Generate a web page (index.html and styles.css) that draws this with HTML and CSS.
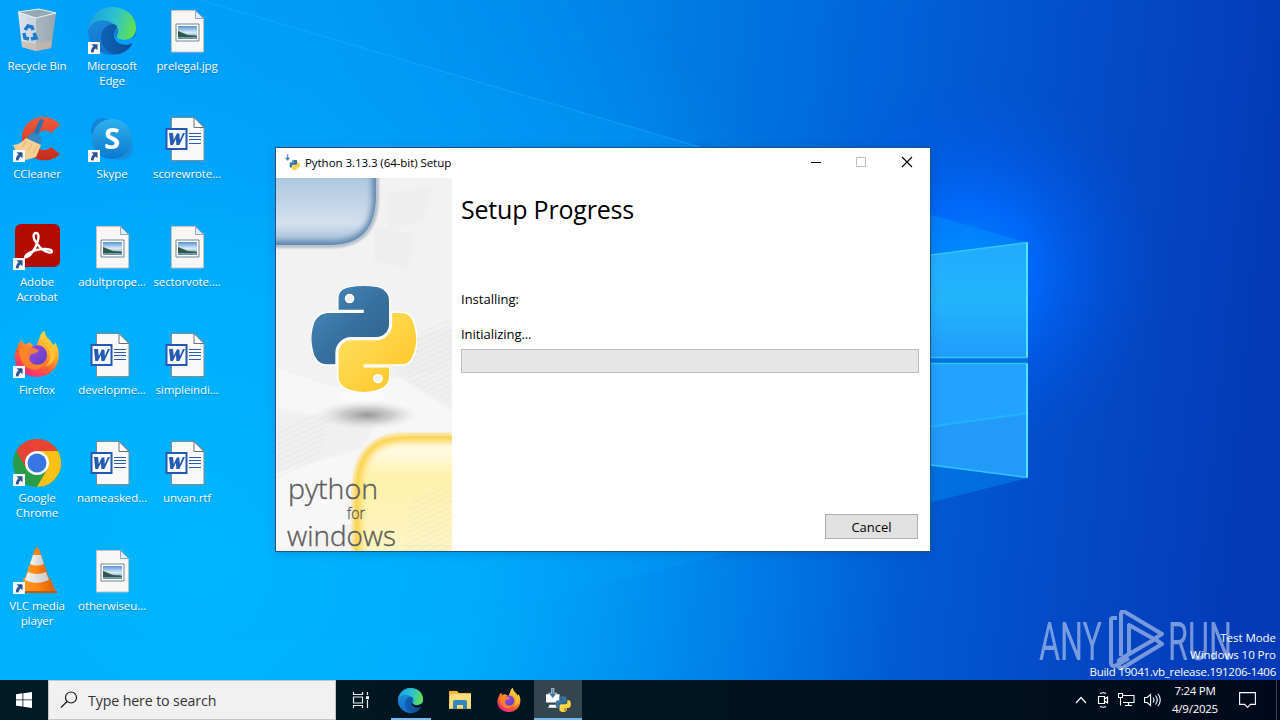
FILE: index.html
```html
<!DOCTYPE html>
<html lang="en">
<head>
<meta charset="utf-8">
<title>Desktop</title>
<link rel="stylesheet" href="styles.css">
</head>
<body>
<svg class="defs" width="0" height="0" aria-hidden="true">
  <defs>
    <linearGradient id="pyBlue" x1="0" y1="0" x2="1" y2="1"><stop offset="0" stop-color="#4a8cc2"/><stop offset=".5" stop-color="#37719f"/><stop offset="1" stop-color="#2f5f8b"/></linearGradient>
    <linearGradient id="pyYellow" x1="0" y1="0" x2="1" y2="1"><stop offset="0" stop-color="#ffe46a"/><stop offset="1" stop-color="#fdc21f"/></linearGradient>
    <linearGradient id="edgeTop" x1="0" y1=".3" x2="1" y2=".5"><stop offset="0" stop-color="#1a9fe0"/><stop offset=".55" stop-color="#2cc3cf"/><stop offset="1" stop-color="#63e04f"/></linearGradient>
    <linearGradient id="edgeMid" x1="0" y1="0" x2=".4" y2="1"><stop offset="0" stop-color="#1b93e2"/><stop offset="1" stop-color="#126fc8"/></linearGradient>
    <linearGradient id="edgeLow" x1="0" y1="0" x2="1" y2="0"><stop offset="0" stop-color="#0f62b5"/><stop offset="1" stop-color="#0b4d98"/></linearGradient>
    <linearGradient id="foxBody" x1=".9" y1="0" x2=".3" y2="1"><stop offset="0" stop-color="#fff04a"/><stop offset=".4" stop-color="#ffa92c"/><stop offset=".7" stop-color="#ff5a38"/><stop offset="1" stop-color="#f0288a"/></linearGradient>
    <linearGradient id="foxGlobe" x1="0" y1="0" x2="1" y2="1"><stop offset="0" stop-color="#a54ae0"/><stop offset="1" stop-color="#5b3fc4"/></linearGradient>
    <linearGradient id="photo" x1="0" y1="0" x2="0" y2="1"><stop offset="0" stop-color="#5b92dc"/><stop offset=".5" stop-color="#d6e9f5"/><stop offset="1" stop-color="#5b8aa0"/></linearGradient>
    <linearGradient id="binBody" x1="0" y1="0" x2="1" y2="0"><stop offset="0" stop-color="#dde6ec"/><stop offset=".6" stop-color="#c3ccd2"/><stop offset="1" stop-color="#8e9ca6"/></linearGradient>
    <linearGradient id="skypeBall" x1="0" y1="0" x2="0" y2="1"><stop offset="0" stop-color="#2db2ee"/><stop offset="1" stop-color="#0b78cf"/></linearGradient>
    <linearGradient id="ccRed" x1="0" y1="0" x2="0" y2="1"><stop offset="0" stop-color="#f15b3b"/><stop offset="1" stop-color="#c52a1c"/></linearGradient>
    <linearGradient id="cone" x1="0" y1="0" x2="1" y2="0"><stop offset="0" stop-color="#ffa126"/><stop offset=".5" stop-color="#ff8412"/><stop offset="1" stop-color="#d95f04"/></linearGradient>
    <linearGradient id="coneWhite" x1="0" y1="0" x2="1" y2="0"><stop offset="0" stop-color="#f6f6f6"/><stop offset="1" stop-color="#c7c9cb"/></linearGradient>
    <mask id="edgeCut"><path d="M0 0h48v48H0z" fill="#fff"/><path d="M29 21c-3 5-3 8 1 10.500 5 2.500 12 2 18-3.500v20h-8l4.500-12c-10 5-20-1-18-10z" fill="#000"/></mask>

    <symbol id="arrow" viewBox="0 0 12 12">
      <path d="M0 0h12v12H0z" fill="#f7f9fb"/>
      <path d="M3.500 2.200h6v6L7.700 6.500C6.200 7.600 5.600 8.600 5.600 10.500L3 10.300C2.800 7.800 3.700 5.900 5.500 4.300z" fill="#2b5590"/>
    </symbol>
    <symbol id="imageFile" viewBox="0 0 48 48">
      <path d="M8.500 3.500h24l8 8v33.500h-32z" fill="#f8f7f7" stroke="#c3c2c4"/>
      <path d="M32.500 3.500v8h8z" fill="#dceefa" stroke="#9aa6b2"/>
      <path d="M13 17h23v17H13z" fill="#fff" stroke="#6f8797"/>
      <path d="M15 19h19v13H15z" fill="url(#photo)"/>
      <path d="M15 24c4 1 6 3 10 4 4 .5 7 0 9 1v1H15z" fill="#2f5948"/>
    </symbol>
    <symbol id="wordFile" viewBox="0 0 48 48">
      <path d="M8.500 2.500h22.500l10 10v33H8.500z" fill="#f9f9f9" stroke="#828b93"/>
      <path d="M31 2.500v10h10z" fill="#fff" stroke="#65717b"/>
      <path d="M26 18.500h12M26 21.500h12M26 24.500h12M26 28.500h12" stroke="#2b5eaf"/>
      <path d="M3.500 14h20v20H3.500z" fill="#fafcff" stroke="#2459b3" stroke-width="2"/>
      <path d="M6 18h4l.8 7 3-6.500h2.500l.6 6.500 3-7H22l-5.600 12h-3l-.5-6-3 6H7.300z" fill="#245ab4"/>
    </symbol>
    <symbol id="edge" viewBox="0 0 48 48">
      <g mask="url(#edgeCut)">
        <circle cx="24" cy="24" r="24" fill="url(#edgeMid)"/>
        <path d="M0 23C1 10 11 0 24 0c15 0 24 10 24 21 0 8-6 12-12 12-5 0-8-2-7-5 3-4 1-9-5-12C15 11 4 13 0 23z" fill="url(#edgeTop)"/>
        <path d="M29 19c-4-4-13-1-15.500 8C11 37 19 48 30 47c7-1 12-6 15-11-9 4-20-1-19-10 .5-3 2-4 3-7z" fill="url(#edgeLow)"/>
      </g>
    </symbol>
    <symbol id="firefox" viewBox="0 0 48 48">
      <path d="M8 10l3 4 6-2c1 2 3 3 6 4l3-7c1-5 3-8 6-9 0 7 7 9 9 15 2-2 2-3 2-3 10 17-1 36-19 36C6 48-5 32 4 16c1-3 2-5 4-6z" fill="url(#foxBody)"/>
      <circle cx="24" cy="25" r="10.500" fill="url(#foxGlobe)"/>
      <path d="M5 19c5-3 9-3 14-2l7 3c-2 4-7 3-9 5-4 9 8 14 16 7-3 9-16 11-22 4-4-4-5-11-6-17z" fill="#ff8a25" opacity=".85"/>
      <path d="M30 14c11 2 10 18 2 23 12-2 15-17 5-24 4 6 0 3-7 1z" fill="#ffc832" opacity=".8"/>
    </symbol>
    <symbol id="python" viewBox="0 0 111.500 112.500">
      <path fill="url(#pyBlue)" fill-rule="evenodd" d="M54.900 0C50.300 0 46 .4 42.100 1.100 30.800 3.100 28.700 7.300 28.700 15v10.250h26.800v3.400H18.600C10.800 28.650 4 33.300 1.900 42.250-.6 52.500-.7 58.800 1.900 69.500c1.900 7.900 6.400 13.600 14.200 13.600h9.250V70.850c0-8.850 7.650-16.650 16.750-16.650h26.800c7.450 0 13.400-6.150 13.400-13.650V15c0-7.250-6.150-12.700-13.400-13.900C64.300.3 59.500 0 54.900 0zM40.400 8.200a5.100 5.100 0 0 1 0 10.200 5.100 5.100 0 0 1 0-10.200z"/>
      <path fill="url(#pyYellow)" fill-rule="evenodd" d="M85.640 28.650v11.900c0 9.250-7.840 17-16.750 17H42.100c-7.330 0-13.400 6.300-13.400 13.640v25.530c0 7.260 6.320 11.540 13.400 13.620 8.500 2.500 16.630 2.950 26.790 0 6.750-1.950 13.400-5.880 13.400-13.620V86.500H55.500v-3.400h40.200c7.800 0 10.700-5.440 13.400-13.600 2.800-8.400 2.690-16.470 0-27.250-1.920-7.750-5.600-13.600-13.400-13.600zM70.570 93.300a5.100 5.100 0 0 1 0 10.200 5.100 5.100 0 0 1 0-10.200z"/>
    </symbol>
    <symbol id="setup" viewBox="0 0 24 24">
      <path class="setup-box" d="M0 6h13v8H0zM3 16h8v3H2v-1h1z"/>
      <path d="M7.500 0v5h3L6.500 10 2.500 5h3V0z" class="setup-arrow"/>
      <use href="#python" x="9" y="8" width="15" height="15"/>
    </symbol>
  </defs>
</svg>

<div class="screen">
  <main class="desktop">
    <svg class="wallpaper" viewBox="0 0 1280 680" preserveAspectRatio="none">
      <defs>
        <linearGradient id="wbase" x1="0" y1="0" x2="1280" y2="130" gradientUnits="userSpaceOnUse">
          <stop offset="0" stop-color="#00a3fa"/><stop offset=".25" stop-color="#0098f4"/><stop offset=".5" stop-color="#0080e6"/><stop offset=".68" stop-color="#0064da"/><stop offset=".85" stop-color="#044cc9"/><stop offset="1" stop-color="#033bb8"/>
        </linearGradient>
        <radialGradient id="wleft" cx="200" cy="560" r="700" gradientUnits="userSpaceOnUse"><stop offset="0" stop-color="#00b8ff"/><stop offset=".4" stop-color="#00b2ff" stop-opacity=".85"/><stop offset=".7" stop-color="#00a6ff" stop-opacity=".4"/><stop offset="1" stop-color="#00a0ff" stop-opacity="0"/></radialGradient>
        <radialGradient id="wglow" cx="970" cy="270" r="190" gradientUnits="userSpaceOnUse"><stop offset="0" stop-color="#0088ff"/><stop offset=".35" stop-color="#006aff" stop-opacity=".85"/><stop offset=".7" stop-color="#005cec" stop-opacity=".35"/><stop offset="1" stop-color="#0054dc" stop-opacity="0"/></radialGradient>
        <linearGradient id="pane" x1="0" y1="0" x2="0" y2="1"><stop offset="0" stop-color="#22aaff"/><stop offset=".5" stop-color="#22b4fb"/><stop offset="1" stop-color="#219cfb"/></linearGradient>
        <linearGradient id="beam" x1="200" y1="0" x2="1028" y2="0" gradientUnits="userSpaceOnUse"><stop offset="0" stop-color="#00a5ff" stop-opacity=".1"/><stop offset=".8" stop-color="#00a5ff" stop-opacity=".3"/><stop offset="1" stop-color="#009dff" stop-opacity=".35"/></linearGradient>
      </defs>
      <path d="M0 0h1280v680H0z" fill="url(#wbase)"/>
      <path d="M0 0h1280v680H0z" fill="url(#wleft)"/>
      <path d="M0 0h1280v680H0z" fill="url(#wglow)"/>
      <path d="M200 0L1028 243V478L380 640H0V0z" fill="url(#beam)"/>
      <path d="M200 0L720 153" stroke="#27b2ff" opacity=".45"/>
      <path d="M900 259l128-17v116H900z" fill="url(#pane)"/>
      <path d="M900 363h128v115L900 461z" fill="#229bf8"/>
      <path d="M900 363h128v50L900 431z" fill="#22a3ff"/>
      <path d="M900 358h128v5H900z" fill="#0074e4"/>
      <path d="M900 431l128-18" stroke="#23bbff" stroke-width="2" opacity=".7"/>
      <path d="M900 259l127-16.500v115H900M900 363.500h127v114L900 461" fill="none" stroke="#31c4ff" stroke-width="1.500"/>
      <path d="M1027 243v114M1027 364v113" stroke="#4ce5ff" stroke-width="2"/>
    </svg>

    <div class="icons">
      <div class="icon">
        <svg class="pic" viewBox="0 0 48 48">
          <path d="M5 5l21-3 17 4-5 35-15 3-14-4z" fill="url(#binBody)"/>
          <path d="M23 10l20-4-5 35-15 3z" fill="#9aa9b4" opacity=".7"/>
          <path d="M5 5l21-3 17 4-20 5z" fill="#94a8b5" stroke="#e8f1f6"/>
          <path d="M9 34l14 3v7L9 40zM23 37l16-4-1 8-15 3z" fill="#cbb5a6" opacity=".7"/>
          <g fill="none" stroke="#1c7bd1" stroke-width="3.500"><path d="M12 23l3-4 4 1 1 3"/><path d="M11 26l1 5 4 1"/><path d="M18 32l5-1-2-5"/></g>
        </svg>
        <span class="label">Recycle Bin</span>
      </div>
      <div class="icon"><svg class="pic" viewBox="0 0 48 48"><use href="#edge" width="48" height="48"/><use href="#arrow" y="35" width="12" height="12"/></svg><span class="label">Microsoft<br>Edge</span></div>
      <div class="icon"><svg class="pic" viewBox="0 0 48 48"><use href="#imageFile" width="48" height="48"/></svg><span class="label">prelegal.jpg</span></div>

      <div class="icon">
        <svg class="pic" viewBox="0 0 48 48">
          <path d="M47 10l-9 8c-7-6-15 0-15 8 0 9 9 12 15 6l9 7C34 52 9 44 9 23 9 2 35-5 47 10z" fill="url(#ccRed)"/>
          <path d="M27 4l4 1-7 18-5-2z" fill="#2674b3"/>
          <path d="M19 17l10 5-2 9-14-7z" fill="#3487c1"/>
          <path d="M13 23l15 7-5 12-10 3C7 42 3 37 0 30c5 0 9-3 13-7z" fill="#f5d094"/>
          <path d="M14 26l-5 6M19 29l-4 7M24 31l-4 7" stroke="#e3b070"/>
          <use href="#arrow" y="35" width="12" height="12"/>
        </svg><span class="label">CCleaner</span>
      </div>
      <div class="icon">
        <svg class="pic" viewBox="0 0 48 48">
          <circle cx="15" cy="15" r="12" fill="#1384da"/><circle cx="33" cy="33" r="12" fill="#188ee3"/><circle cx="24" cy="24" r="20" fill="url(#skypeBall)"/>
          <text x="24" y="34" text-anchor="middle" class="skype-s">S</text>
          <use href="#arrow" y="35" width="12" height="12"/>
        </svg><span class="label">Skype</span>
      </div>
      <div class="icon"><svg class="pic" viewBox="0 0 48 48"><use href="#wordFile" width="48" height="48"/></svg><span class="label">scorewrote...</span></div>

      <div class="icon">
        <svg class="pic" viewBox="0 0 48 48">
          <rect x="2" y="1" width="45" height="43" rx="6" fill="#b30b00"/>
          <path d="M23 10c5 0 2 13-6 22-6 5-7 1 1-3 6-3 15-4 20-2 4 4-6 4-13-5-6-7-5-12-2-12z" fill="none" stroke="#fff" stroke-width="2.400"/>
          <use href="#arrow" y="35" width="12" height="12"/>
        </svg><span class="label">Adobe<br>Acrobat</span>
      </div>
      <div class="icon"><svg class="pic" viewBox="0 0 48 48"><use href="#imageFile" width="48" height="48"/></svg><span class="label">adultprope...</span></div>
      <div class="icon"><svg class="pic" viewBox="0 0 48 48"><use href="#imageFile" width="48" height="48"/></svg><span class="label">sectorvote....</span></div>

      <div class="icon"><svg class="pic" viewBox="0 0 48 48"><use href="#firefox" x="1" width="46" height="46"/><use href="#arrow" y="35" width="12" height="12"/></svg><span class="label">Firefox</span></div>
      <div class="icon"><svg class="pic" viewBox="0 0 48 48"><use href="#wordFile" width="48" height="48"/></svg><span class="label">developme...</span></div>
      <div class="icon"><svg class="pic" viewBox="0 0 48 48"><use href="#wordFile" width="48" height="48"/></svg><span class="label">simpleindi...</span></div>

      <div class="icon">
        <svg class="pic" viewBox="0 0 48 48">
          <circle cx="24" cy="24" r="24" fill="#2a9c47"/>
          <path d="M24 24l-20.800-12A24 24 0 0 1 44.800 12z" fill="#ea4335"/>
          <path d="M24 12h20.800A24 24 0 0 1 24 48l10.400-18z" fill="#fbc116"/>
          <path d="M3.200 12L13.600 30 24 24z" fill="#ea4335"/>
          <circle cx="24" cy="24" r="12" fill="#fff"/><circle cx="24" cy="24" r="9.500" fill="#3876e4"/>
          <use href="#arrow" y="35" width="12" height="12"/>
        </svg><span class="label">Google<br>Chrome</span>
      </div>
      <div class="icon"><svg class="pic" viewBox="0 0 48 48"><use href="#wordFile" width="48" height="48"/></svg><span class="label">nameasked...</span></div>
      <div class="icon"><svg class="pic" viewBox="0 0 48 48"><use href="#wordFile" width="48" height="48"/></svg><span class="label">unvan.rtf</span></div>

      <div class="icon">
        <svg class="pic" viewBox="0 0 48 48">
          <path d="M11 31h26l6 14H7z" fill="url(#cone)"/><path d="M5 44h39v2H5z" fill="#c95b07"/>
          <path d="M22 2q2-3 4 0l11 32q-13 8-26 0z" fill="url(#cone)"/>
          <path d="M20 8h8l3 9q-7 3-14 0z" fill="url(#coneWhite)"/>
          <path d="M15 25q9 4 18 0l3 8q-12 6-24 0z" fill="url(#coneWhite)"/>
          <use href="#arrow" y="35" width="12" height="12"/>
        </svg><span class="label">VLC media<br>player</span>
      </div>
      <div class="icon"><svg class="pic" viewBox="0 0 48 48"><use href="#imageFile" width="48" height="48"/></svg><span class="label">otherwiseu...</span></div>
    </div>

    <svg class="brand" viewBox="0 0 194 62">
      <g fill="#fff">
        <text x="0" y="50" textLength="63" lengthAdjust="spacingAndGlyphs">ANY</text>
        <text x="129" y="50" textLength="64" lengthAdjust="spacingAndGlyphs">RUN</text>
      </g>
      <g fill="none" stroke="#fff" stroke-width="4" stroke-linejoin="round">
        <path d="M78 8h-4q-2 0-2 2v42q0 6 6 3l12-7"/>
        <path d="M82 46V4q0-4 4-2l37 22-8 5-25-14v30"/>
        <path d="M80 49v7q0 4 5 1l38-23-7-5-36 21"/>
      </g>
    </svg>
    <div class="build">
      <p class="mode">Test Mode</p>
      <p class="edition">Windows 10 Pro</p>
      <p class="number">Build 19041.vb_release.191206-1406</p>
    </div>

    <section class="window">
      <header class="titlebar">
        <svg class="app light" viewBox="0 0 24 24"><use href="#setup" width="24" height="24"/></svg>
        <h1 class="title">Python 3.13.3 (64-bit) Setup</h1>
        <svg class="control" viewBox="0 0 46 30"><path d="M19 14.500h10" stroke="#000"/></svg>
        <svg class="control" viewBox="0 0 46 30"><path d="M18.500 9.500h9v9h-9z" fill="none" stroke="#bdbdbd"/></svg>
        <svg class="control" viewBox="0 0 46 30"><path d="M18 9l10 10M28 9L18 19" stroke="#000" stroke-width="1.100"/></svg>
      </header>
      <div class="body">
        <svg class="banner" viewBox="0 0 176 373">
          <defs>
            <linearGradient id="bblue" x1="0" y1="0" x2="0" y2="1"><stop offset="0" stop-color="#abc5dd"/><stop offset=".7" stop-color="#d3e0ee"/><stop offset="1" stop-color="#9dbad5"/></linearGradient>
            <linearGradient id="byellow" x1="0" y1="0" x2="0" y2="1"><stop offset="0" stop-color="#fffbe8"/><stop offset=".15" stop-color="#fffadf"/><stop offset=".35" stop-color="#fff1ab"/><stop offset="1" stop-color="#fff5c4"/></linearGradient>
            <radialGradient id="bshadow"><stop offset="0" stop-color="#777" stop-opacity=".75"/><stop offset=".5" stop-color="#999" stop-opacity=".45"/><stop offset="1" stop-color="#ccc" stop-opacity="0"/></radialGradient>
            <pattern id="hatch" width="7" height="5" patternUnits="userSpaceOnUse" patternTransform="rotate(-25)"><path d="M0 2h7" stroke="#cfcfcf" stroke-width="1"/></pattern>
            <filter id="soft" x="-20%" y="-20%" width="140%" height="140%"><feGaussianBlur stdDeviation="3"/></filter>
            <filter id="softer"><feGaussianBlur stdDeviation="1.200"/></filter>
            <clipPath id="cblue"><path d="M0 0h100v18Q100 67 54 67H0z"/></clipPath>
            <clipPath id="cyellow"><path d="M176 258h-46q-51 0-51 57v58h97z"/></clipPath>
          </defs>
          <path d="M0 0h176v373H0z" fill="#f2f2f2"/>
          <path d="M0 190l60 20 116-20v120L0 373z" fill="#f7f7f7"/>
          <path d="M112 15l43-6-8 34-34 8zM98 48l40 8-5 35-35-8zM0 230l100 18-12 22-88 25zM110 170l66-22v85l-55-35z" fill="#ebebeb" opacity=".5" filter="url(#softer)"/>
          <path d="M0 250l54-18-10 48-44 22zM125 155l51-14v85l-44-21z" fill="url(#hatch)" opacity=".3"/>
          <path d="M101-9v27Q101 68 54 68H-9" fill="none" stroke="#b3bfca" stroke-width="4" filter="url(#softer)"/>
          <g clip-path="url(#cblue)"><path d="M-5-5h105v23Q100 67 54 67H-5z" fill="url(#bblue)"/><path d="M101-20v38Q101 68 54 68H-20" fill="none" stroke="#5580a9" stroke-width="9" filter="url(#soft)"/></g>
          <path d="M176 257h-46q-52 0-52 58v58" fill="none" stroke="#fbe08a" stroke-width="4" filter="url(#softer)"/>
          <g clip-path="url(#cyellow)"><path d="M176 258h-46q-51 0-51 57v58h97z" fill="url(#byellow)"/><path d="M190 258h-60q-51 0-51 57v80" fill="none" stroke="#fbd34f" stroke-width="12" filter="url(#soft)"/><path d="M135 320l41-15v68h-48z" fill="url(#hatch)" opacity=".3"/></g>
          <ellipse cx="91" cy="237" rx="51" ry="14" fill="url(#bshadow)"/>
          <path d="M63 215h45v7H63z" fill="#fff" opacity=".4"/>
          <g stroke="#fff" stroke-width="3" paint-order="stroke"><use href="#python" x="35" y="108" width="106" height="106"/></g>
          <g class="slogan">
            <text x="12" y="320.500" font-size="28" textLength="90" lengthAdjust="spacingAndGlyphs">python</text>
            <text x="71" y="341" font-size="17" textLength="18" lengthAdjust="spacingAndGlyphs">for</text>
            <text x="11" y="368" font-size="28" textLength="109" lengthAdjust="spacingAndGlyphs">windows</text>
          </g>
        </svg>
        <div class="content">
          <h2 class="heading">Setup Progress</h2>
          <p class="status">Installing:</p>
          <p class="step">Initializing...</p>
          <div class="progress"></div>
          <button class="cancel" type="button">Cancel</button>
        </div>
      </div>
    </section>
  </main>

  <footer class="taskbar">
    <div class="start"><svg width="16" height="16" viewBox="0 0 16 16"><path d="M0 2.200l6.500-.9v6.200H0zM7.300 1.200L16 0v7.500H7.300zM0 8.300h6.500v6.200L0 13.700zM7.300 8.300H16V16l-8.700-1.200z" fill="#fff"/></svg></div>
    <div class="search">
      <svg width="18" height="18" viewBox="0 0 18 18"><circle cx="11" cy="6.500" r="5.500" fill="none" stroke="#1c1c1c" stroke-width="1.200"/><path d="M7 10.500L1 16.500" stroke="#1c1c1c" stroke-width="1.300"/></svg>
      <span>Type here to search</span>
    </div>
    <div class="task view"><svg width="18" height="16" viewBox="0 0 18 16"><path d="M1.500 0v2.500h9V0M1.500 5h9v6h-9zM1.500 16v-2.500h9V16M15.500 0v3M15.500 8v8" fill="none" stroke="#e7ecee" stroke-width="1.200"/><path d="M14 4.200h3v3h-3z" fill="#fff"/></svg></div>
    <div class="task running wide"><svg width="25" height="25"><use href="#edge"/></svg></div>
    <div class="task"><svg width="22" height="20" viewBox="0 0 22 20"><path d="M0 1h8l2 2h12v16H0z" fill="#f6b73c"/><path d="M1 4h21v14H0z" fill="#ffdd7c"/><path d="M4 19v-7q0-2 2-2h10q2 0 2 2v7h-4v-4H8v4z" fill="#3288bd"/></svg></div>
    <div class="task"><svg width="24" height="24"><use href="#firefox"/></svg></div>
    <div class="task running active"><svg width="25" height="25"><use href="#setup"/></svg></div>
    <div class="tray">
      <svg width="12" height="8" viewBox="0 0 12 8"><path d="M1 7l5-5.500L11 7" fill="none" stroke="#fff" stroke-width="1.200"/></svg>
      <svg width="14" height="16" viewBox="0 0 14 16"><path d="M4 1.500q3-1.500 6 0M4 14.500q3 1.500 6 0M2.500 4.500h6v7h-6zM8.500 7l3-2v6l-3-2" fill="none" stroke="#fff" stroke-width="1.200"/></svg>
      <svg width="17" height="14" viewBox="0 0 17 14"><path d="M5 2.500h11v7H5M.5.500h4v4h-4zM2.500 4.500v8M10.500 9.500v3M7 12.500h7" fill="none" stroke="#fff" stroke-width="1.100"/></svg>
      <svg width="17" height="14" viewBox="0 0 17 14"><path d="M.6 4.500h2.500l3.500-3v11l-3.500-3H.6zM9 4.500q2 2.500 0 5M11.500 2.500q3.500 4.500 0 9M14 .7q4.500 6.300 0 12.600" fill="none" stroke="#fff" stroke-width="1.100"/></svg>
      <div class="clock"><span>7:24 PM</span><span>4/9/2025</span></div>
      <svg width="17" height="16" viewBox="0 0 17 16"><path d="M.6.600h15.800v11.800h-5L8.500 15.300l-2.900-2.900h-5z" fill="none" stroke="#fff" stroke-width="1.100"/></svg>
      <span class="peek"></span>
    </div>
  </footer>
</div>
</body>
</html>
```
FILE: styles.css
```css
* { box-sizing: border-box; }
body { margin: 0; font-family: "Open Sans", "Noto Sans", sans-serif; overflow: hidden; }
h1, h2, p { margin: 0; font-weight: 400; }
.defs { position: absolute; }
.screen { width: 1280px; height: 720px; display: flex; flex-direction: column; }
.desktop { position: relative; flex: 1; overflow: hidden; }
.wallpaper { position: absolute; inset: 0; width: 100%; height: 100%; }

.icons { position: relative; width: 225px; padding-top: 7px; display: grid; grid-template-columns: repeat(3, 75px); grid-auto-rows: 108px; }
.icon { display: flex; flex-direction: column; align-items: center; gap: 3px; }
.pic { width: 48px; height: 48px; flex: none; margin-right: 1px; }
.label { color: #fff; font-size: 11.5px; line-height: 15px; letter-spacing: -.1px; text-align: center; white-space: nowrap; text-shadow: 0 1px 1px rgba(0, 40, 90, .35); margin-right: 1px; }
.skype-s { font: 700 29px "Open Sans", sans-serif; fill: #fff; }

.brand { position: absolute; left: 1039px; top: 610px; width: 194px; height: 62px; opacity: .46; font: 400 53px Roboto, sans-serif; }
.build { position: absolute; right: 4px; top: 629px; color: #fff; font-size: 11.5px; line-height: 17px; letter-spacing: -.26px; text-align: right; white-space: nowrap; }
.mode, .edition { letter-spacing: -.05px; }

.window { position: absolute; left: 275px; top: 147px; width: 656px; height: 405px; border: 1px solid #14568d; background: #fff; display: flex; flex-direction: column; box-shadow: 0 2px 9px rgba(0, 30, 80, .18); }
.titlebar { display: flex; height: 30px; align-items: center; flex: none; }
.app { width: 17px; height: 17px; margin: -2px 5px 0 7px; }
.setup-box { fill: #fff; }
.setup-arrow { fill: #3977ab; stroke: #fff; stroke-width: .6; }
.light .setup-box { fill: #6f7d87; }
.title { flex: 1; font-size: 11.6px; line-height: 20px; letter-spacing: -.1px; white-space: nowrap; margin-top: -1px; }
.control { width: 46px; height: 30px; flex: none; }
.body { flex: 1; display: flex; min-height: 0; }
.banner { width: 176px; height: 373px; flex: none; }
.slogan { font-family: "Open Sans", sans-serif; font-weight: 300; fill: #5c5c5c; stroke: #5c5c5c; stroke-width: .35; }
.content { flex: 1; display: flex; flex-direction: column; padding: 13px 11px 12px 9px; color: #000; }
.heading { font-size: 25px; line-height: 36px; letter-spacing: -.2px; white-space: nowrap; }
.status { margin-top: 62px; font-size: 13px; line-height: 20px; }
.step { margin-top: 15px; font-size: 13px; line-height: 20px; letter-spacing: -.05px; }
.progress { margin-top: 5px; height: 24px; border: 1px solid #bcbcbc; background: #e6e6e6; }
.cancel { margin: auto 1px 0 auto; width: 93px; height: 25px; padding: 0; border: 1px solid #adadad; background: #e1e1e1; color: #000; font: 13px/22px "Open Sans", sans-serif; }

.taskbar { height: 40px; display: flex; background: linear-gradient(90deg, #001a24, #00141f 60%, #00091b); color: #fff; }
.start { width: 48px; display: grid; place-items: center; }
.search { width: 288px; display: flex; align-items: center; gap: 10px; padding-left: 11px; background: #f1f1f1; border: 1px solid #c2c5c6; color: #333; font-size: 14.2px; letter-spacing: -.12px; white-space: nowrap; }
.task { width: 49px; position: relative; display: grid; place-items: center; }
.running::after { content: ""; position: absolute; left: 0; right: 0; bottom: 0; height: 2px; background: #76b9ed; }
.wide::after { left: 5px; right: 4px; }
.task.view { width: 50px; padding-right: 1px; }
.active { width: 48px; margin-left: 1px; background: #33454e; }
.tray { margin-left: auto; display: flex; align-items: center; gap: 8.5px; }
.clock { display: flex; flex-direction: column; width: 52px; align-items: center; font-size: 11.5px; line-height: 18px; letter-spacing: -.25px; margin-right: 9px; white-space: nowrap; }
.peek { align-self: stretch; margin-left: 12px; width: 4px; border-left: 1px solid #39434f; }
```
